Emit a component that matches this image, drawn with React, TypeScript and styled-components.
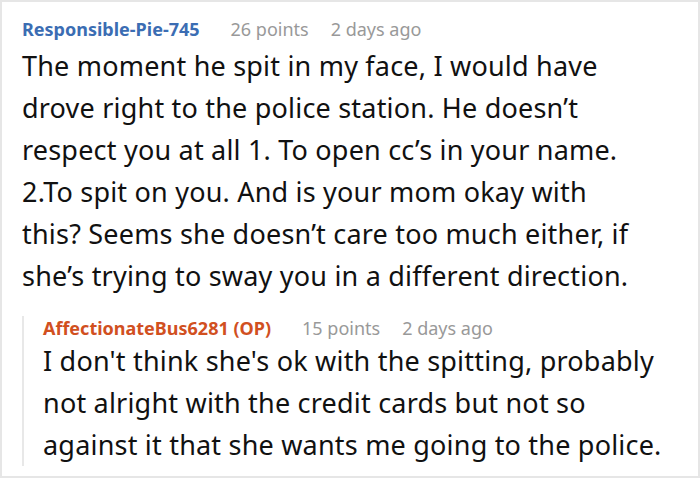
import React from "react";
import styled, { createGlobalStyle } from "styled-components";

const Global = createGlobalStyle`
  html, body { margin: 0; padding: 0; background: #fff; }
  body { width: 700px; height: 478px; overflow: hidden; }
`;

const Frame = styled.div`
  box-sizing: border-box;
  width: 700px;
  height: 478px;
  border: 2px solid #e6e6e6;
  padding: 15px 10px 0 20px;
  font-family: "Noto Sans", "Open Sans", sans-serif;
`;

const Header = styled.div<{ $gap?: number }>`
  display: flex;
  align-items: baseline;
  font-size: 18px;
  line-height: 24px;
  margin-bottom: ${(p) => p.$gap ?? 0}px;
`;

const Author = styled.span<{ $op?: boolean }>`
  font-weight: 700;
  color: ${(p) => (p.$op ? "#d1501f" : "#3b6db3")};
  margin-right: 31px;
`;

const Meta = styled.span`
  color: #999;
  & + & {
    margin-left: 22px;
  }
`;

const Body = styled.p`
  margin: 0;
  font-size: 27px;
  letter-spacing: 0.2px;
  line-height: 42px;
  color: #111;
  white-space: nowrap;
`;

const Reply = styled.div`
  margin-top: 19px;
  border-left: 2px solid #e8e8e8;
  padding-left: 19px;
`;

export default function App() {
  return (
    <>
      <Global />
      <Frame>
        <Header $gap={4}>
          <Author>Responsible-Pie-745</Author>
          <Meta>26 points</Meta>
          <Meta>2 days ago</Meta>
        </Header>
        <Body>
          The moment he spit in my face, I would have
          <br />
          drove right to the police station. He doesn’t
          <br />
          respect you at all 1. To open cc’s in your name.
          <br />
          2.To spit on you. And is your mom okay with
          <br />
          this? Seems she doesn’t care too much either, if
          <br />
          she’s trying to sway you in a different direction.
        </Body>
        <Reply>
          <Header>
            <Author $op>AffectionateBus6281 (OP)</Author>
            <Meta>15 points</Meta>
            <Meta>2 days ago</Meta>
          </Header>
          <Body>
            I don't think she's ok with the spitting, probably
            <br />
            not alright with the credit cards but not so
            <br />
            against it that she wants me going to the police.
          </Body>
        </Reply>
      </Frame>
    </>
  );
}
